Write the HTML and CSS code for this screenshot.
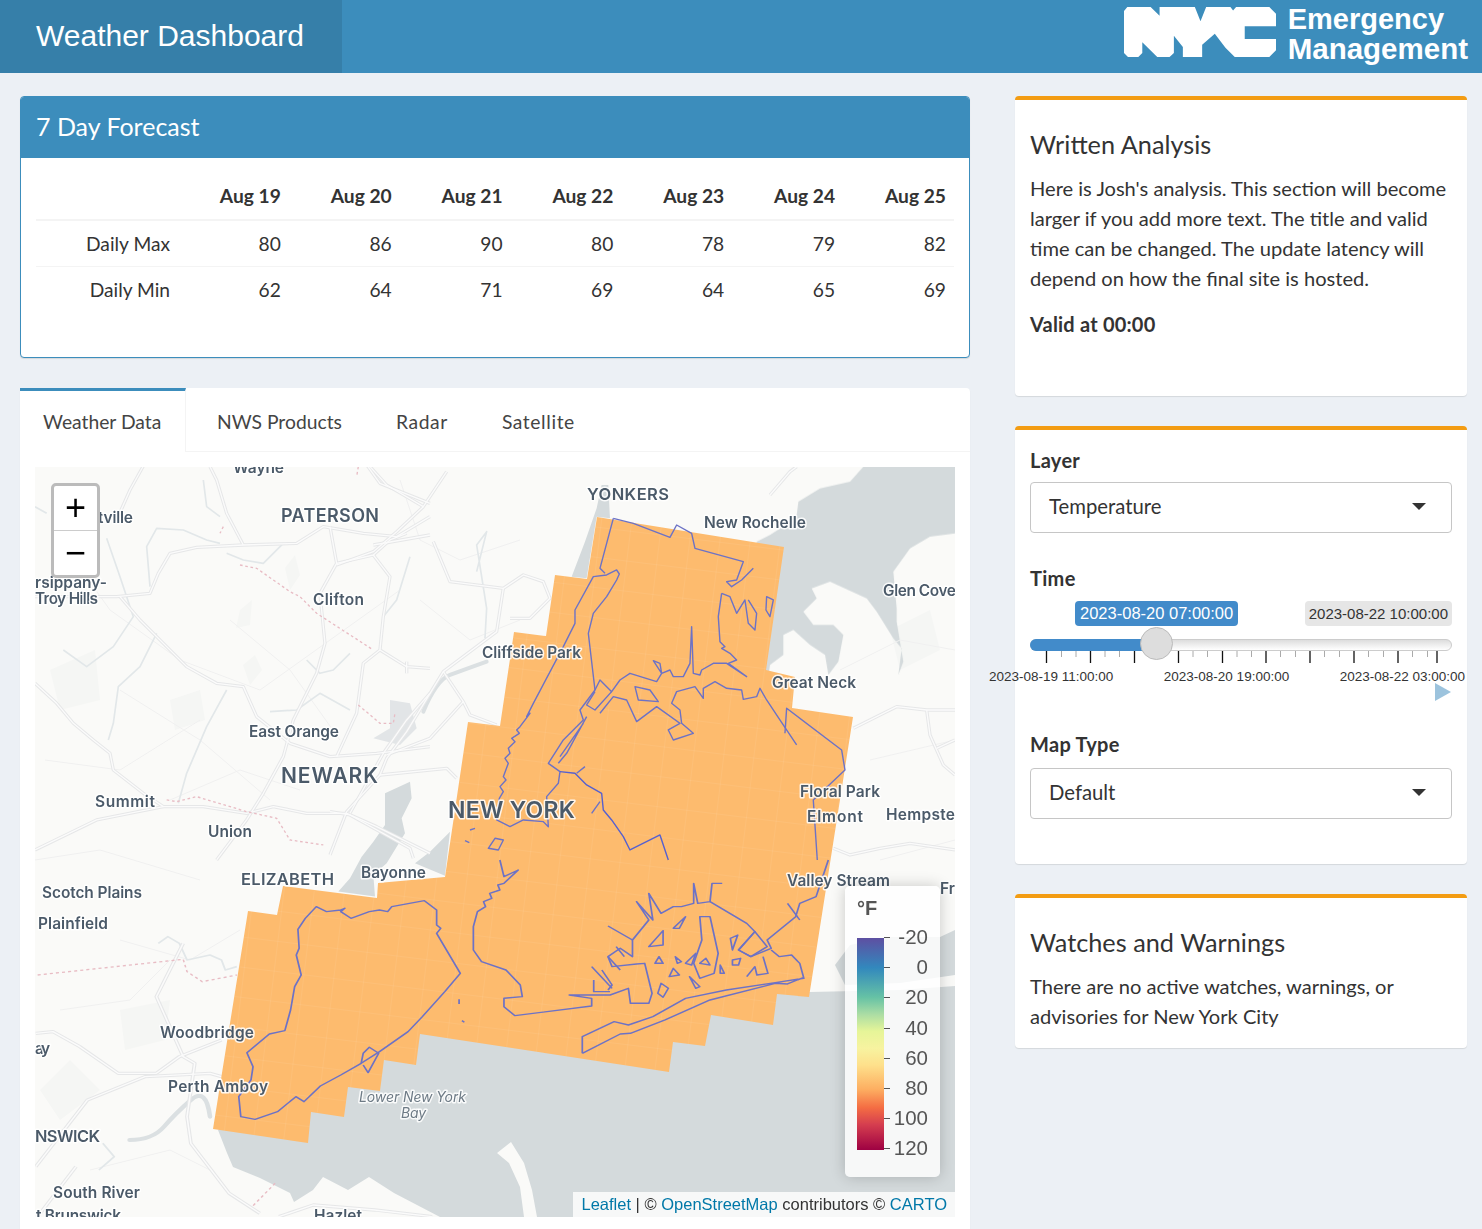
FILE: index.html
```html
<!DOCTYPE html>
<html>
<head>
    <meta charset="UTF-8">
    <meta name="viewport" content="width=device-width, initial-scale=1.0">
    <title>Weather Dashboard</title>
    <link rel="stylesheet" href="styles.css">
</head>
<body>
    <header class="topbar">
        <div class="brand">Weather Dashboard</div>
        <div class="logo">
            <svg class="logo-mark" viewBox="15 12 457 150" aria-label="NYC">
                <path d="M25 12H95L122 38V12H228L245 55L262 12H335L343 22L352 12H452L472 32V70H378V108H472V142L452 162H348L320 134L288 92L250 125V162H192V132L165 98V150L152 162H115L70 118V150L58 162H27L15 150V24Z"/>
            </svg>
            <div class="logo-text"><span class="logo-line1">Emergency</span><br>Management</div>
        </div>
    </header>

    <div class="content">
        <div class="left-col">
            <section class="forecast">
                <h2 class="forecast-title">7 Day Forecast</h2>
                <div class="forecast-body">
                    <table class="forecast-table">
                        <thead>
                            <tr><th></th><th>Aug 19</th><th>Aug 20</th><th>Aug 21</th><th>Aug 22</th><th>Aug 23</th><th>Aug 24</th><th>Aug 25</th></tr>
                        </thead>
                        <tbody>
                            <tr><td>Daily Max</td><td>80</td><td>86</td><td>90</td><td>80</td><td>78</td><td>79</td><td>82</td></tr>
                            <tr><td>Daily Min</td><td>62</td><td>64</td><td>71</td><td>69</td><td>64</td><td>65</td><td>69</td></tr>
                        </tbody>
                    </table>
                </div>
            </section>

            <section class="tabbox">
                <nav class="tabs">
                    <a class="tab active">Weather Data</a>
                    <a class="tab">NWS Products</a>
                    <a class="tab tab-spaced">Radar</a>
                    <a class="tab tab-spaced">Satellite</a>
                </nav>
                <div class="tab-pane">
                    <div class="map">
                        <svg class="map-canvas" viewBox="35 467 920 750">
                            <defs>
                                <filter id="soft"><feGaussianBlur stdDeviation="0.45"/></filter>
                                <clipPath id="overlayClip">
                                    <polygon points="597,517 784,547 766,670 795,677 792,708 853,717 809,997 777,994 773,1025 711,1015 705,1046 673,1042 669,1072 420,1034 416,1065 384,1060 380,1091 348,1087 344,1117 311,1112 308,1143 213,1129 248,911 277,915 283,886 377,898 378,883 445,877 468,722 500,726 514,632 546,636 555,575 587,579"/>
                                </clipPath>
                                <pattern id="tileGrid" width="30" height="30" patternUnits="userSpaceOnUse" patternTransform="rotate(7)">
                                    <path d="M30 0H0V30" fill="none" stroke="#fff" stroke-opacity="0.12"/>
                                </pattern>
                                <g id="roads">
                                    <g transform="translate(30 460) scale(.3333)">
                                        <path d="M15 410L260 410 360 400 385 340 420 280 500 262 640 255 800 250 880 200 1000 220 1100 230 1200 170"/>
                                        <path d="M270 410L330 480 410 560 470 620 560 670 640 680 680 770 780 850 900 890 1040 880 1200 860"/>
                                        <path d="M640 255L590 160 560 60 540 20"/>
                                        <path d="M900 200L920 310 870 400 885 550 860 640 790 780 760 890 700 1000 650 1080 560 1200"/>
                                        <path d="M15 670L80 730 130 790 190 840 240 880 250 930 340 1000 400 1040 520 1040 650 1060 730 1040 830 1060 950 1060 1040 1100 1200 1180"/>
                                        <path d="M920 310L1030 285 1080 240 1130 220"/>
                                        <path d="M1030 285L1080 350 1060 470 1050 570 1130 620 1200 625"/>
                                        <path d="M1050 570L1000 610 980 760 920 890"/>
                                        <path d="M15 1170L200 1080 400 1040"/>
                                        <path d="M960 1060L1060 880 1130 780 1200 700"/>
                                        <path d="M1000 0L1050 70 1200 130"/>
                                        <path d="M350 0L300 90 260 180"/>
                                    </g>
                                    <g transform="translate(330 465) scale(.3333)">
                                        <path d="M310 230L360 350 520 370 580 330 640 350 660 400 600 460 540 460"/>
                                        <path d="M520 370L500 500 340 620 230 800 170 880 150 930 350 910 380 940"/>
                                        <path d="M340 620L400 710 420 750 500 780"/>
                                        <path d="M400 710L300 820 170 870"/>
                                        <path d="M150 930L50 1040 0 1170"/>
                                        <path d="M0 1040L60 1050 240 1150 250 1180"/>
                                        <path d="M130 240L300 210"/>
                                        <path d="M120 5L170 60 280 125 350 20"/>
                                        <path d="M280 125L200 200 130 260 20 300"/>
                                        <path d="M230 590V625"/>
                                    </g>
                                    <g transform="translate(30 900) scale(.383 .3333)">
                                        <path d="M15 400L60 395 130 440 230 520 330 520 390 470 500 420"/>
                                        <path d="M400 130L330 290 400 470 430 490 410 650 420 730 520 880 600 940"/>
                                        <path d="M15 800L150 600 300 530 470 520 500 530"/>
                                        <path d="M120 800L20 950"/>
                                        <path d="M650 950L740 915 900 930 1050 950"/>
                                    </g>
                                    <g transform="translate(770 465) scale(.3333)">
                                        <path d="M250 790L380 725 470 735 555 735"/>
                                        <path d="M470 735L480 810 520 900 555 930"/>
                                        <path d="M500 850L555 825"/>
                                        <path d="M190 1150L240 1170 330 1150 420 1135 555 1155"/>
                                        <path d="M0 90L60 20 80 5"/>
                                    </g>
                                </g>
                            </defs>

                            <rect class="land" x="35" y="467" width="920" height="750"/>

                            <g filter="url(#soft)">
                                <g class="parks">
                                    <polygon points="243,665 255,655 262,670 250,685"/>
                                    <polygon points="285,568 295,555 300,575 290,590"/>
                                    <polygon points="240,610 252,600 250,625 236,628"/>
                                    <polygon points="170,700 200,690 205,720 175,730"/>
                                    <polygon points="50,670 95,650 100,700 60,710"/>
                                    <polygon points="40,1090 70,1060 100,1090 60,1120"/>
                                    <polygon points="120,1010 170,1000 165,1040 125,1050"/>
                                    <polygon points="890,630 930,610 940,650 900,670"/>
                                </g>

                                <g class="water">
                                    <polygon points="218,1130 227,1153 233,1167 260,1178 290,1193 294,1202 313,1190 323,1177 348,1190 369,1177 394,1193 440,1217 955,1217 955,986 900,990 810,992 600,1000 420,1000"/>
                                    <polygon transform="translate(770 465) scale(.3333)" points="-60,1000 0,600 40,570 40,510 70,495 120,540 165,570 175,630 205,590 220,510 190,480 130,480 100,440 140,400 125,370 180,350 290,400 320,440 370,520 395,550 385,630 400,590 380,470 380,430 370,320 420,250 480,215 555,205 555,5 280,5 240,50 150,70 85,110 80,150 30,190 0,210 -40,230"/>
                                    <polygon transform="translate(330 465) scale(.3333)" points="835,60 840,160 800,155 770,340 725,335 765,230 800,130 815,60"/>
                                    <polygon transform="translate(330 465) scale(.3333)" points="165,985 240,950 245,1000 215,1060 225,1105 170,1195 130,1230 135,1295 25,1280 60,1240 95,1175 130,1130 165,1080"/>
                                    <polygon transform="translate(330 465) scale(.3333)" points="345,1232 360,1100 300,1160 255,1195"/>
                                    <polygon points="835,965 850,945 890,937 940,937 955,930 955,975 900,983 845,985"/>
                                    <path class="water-line" transform="translate(330 465) scale(.3333)" d="M470 590Q400 615 360 630T280 740"/>
                                    <path class="water-line" transform="translate(30 900) scale(.383 .3333)" d="M260 720Q320 720 350 680T420 600 470 650"/>
                                </g>
                                <polygon class="marsh" transform="translate(330 465) scale(.3333)" points="180,705 240,715 260,790 210,840 130,820 180,790"/>
                                <polygon class="land" points="497,1153 511,1142 524,1163 532,1190 537,1217 524,1217 520,1187 509,1163"/>

                                <g class="minor-roads">
                                    <path d="M60 540L110 610 180 660 260 690 330 640 400 590"/>
                                    <path d="M120 690L200 740 270 800"/>
                                    <path d="M230 620L290 670 340 740"/>
                                    <path d="M45 760L120 770 200 720"/>
                                    <path d="M170 800L240 770 300 790"/>
                                    <path d="M400 480L420 540 460 560 520 540"/>
                                    <path d="M420 600L470 640 520 620"/>
                                    <path d="M120 940L190 960 240 930"/>
                                    <path d="M60 1010L130 1000 170 960"/>
                                    <path d="M90 1170L170 1150 210 1170"/>
                                    <path d="M35 860L100 850 200 880"/>
                                    <path d="M870 760L955 740"/>
                                    <path d="M880 860L955 840"/>
                                    <path d="M840 670L900 640 955 650"/>
                                </g>

                                <g class="rivers">
                                    <g transform="translate(30 460) scale(.3333)">
                                        <path d="M360 380L350 260 380 205 460 210 530 240 570 250"/>
                                        <path d="M15 140L50 160"/>
                                        <path d="M590 280L640 300 700 310 760 250"/>
                                        <path d="M230 235L270 350 310 470 250 560 170 620 100 570"/>
                                        <path d="M380 520L330 620 265 680 250 790 235 840"/>
                                        <path d="M590 690L530 800 470 940 445 1030"/>
                                        <path d="M720 755L800 750 870 700 960 750"/>
                                        <path d="M830 600L870 640 910 630 960 580"/>
                                        <path d="M520 60L530 140 570 170"/>
                                        <path d="M1060 470L1100 420 1140 290"/>
                                    </g>
                                    <g transform="translate(30 900) scale(.383 .3333)">
                                        <path d="M335 130L360 110 390 130 410 180 470 165 500 180 510 210 540 200"/>
                                        <path d="M190 730L220 770 180 810"/>
                                    </g>
                                    <path transform="translate(330 465) scale(.3333)" d="M440 320L470 200 440 240 470 430 465 520"/>
                                </g>

                                <use href="#roads" class="road-casing"/>
                                <use href="#roads" class="road-core"/>

                                <g class="boundary">
                                    <path transform="translate(30 460) scale(.3333)" d="M630 315L680 325 780 395 810 410 860 460 1030 570M985 735L1050 790 1090 790 1095 760M410 1020L440 1025 500 1010 650 1055 740 1075 780 1140 880 1155M985 20L980 50M580 200L570 220"/>
                                    <path transform="translate(30 900) scale(.383 .3333)" d="M20 225L400 178 410 215 450 245 540 225M640 850L580 920"/>
                                </g>
                            </g>

                            <g clip-path="url(#overlayClip)">
                                <rect class="overlay" x="200" y="500" width="670" height="660"/>
                                <rect x="200" y="500" width="670" height="660" fill="url(#tileGrid)"/>
                            </g>

                            <g class="outlines">
                                <g transform="translate(420 500) scale(.3333)">
                                    <path d="M580 55L640 70 750 112 770 75 815 100 825 145 970 185 950 240 920 245 935 260 965 240 1000 205"/>
                                    <path d="M580 55L540 205 555 220"/>
                                    <path d="M598 222L590 210 560 225 520 230 465 330 465 370 430 440 340 610 320 650 330 640 300 680 290 690 298 700 275 715 285 725 265 745 270 760 255 775 265 790 250 830 258 840 240 860 250 875 238 895 230 960 270 980 310 960 370 965 385 980 380 890 415 850 420 815 385 790 430 720 490 660 480 630 525 570 505 400 520 340 560 290 590 240Z"/>
                                    <path d="M905 280L895 350 900 425 915 440 905 445 930 460 950 480 925 490 980 530 920 490 880 490 845 510 840 525 820 520 815 380 810 490 790 530 760 530 750 510 725 520 720 490 700 482 725 520 710 545 630 520 600 540 575 575 540 540 525 570"/>
                                    <path d="M905 280L930 290 950 340 975 300 985 370 1005 390 1010 340 985 300"/>
                                    <path d="M1040 290L1060 300 1050 350 1038 330Z"/>
                                    <path d="M575 575L525 630 500 615 525 575M540 640L580 590 620 600 650 665 710 620 780 670 745 690 760 720 820 700 785 670 780 630 755 610 770 575 825 560 850 595 850 565 885 545 920 565 965 570 970 598 1010 590 1020 565 1040 600 1130 735"/>
                                    <path d="M645 560L655 600 715 605 690 570Z"/>
                                    <path d="M500 650L440 760 415 790M490 670L420 770"/>
                                    <path d="M1095 700L1100 625 1265 750 1275 810 1180 900 1192 1080"/>
                                    <path class="outline-strong" d="M420 815L465 820 500 855 545 880 550 930 575 960 610 1010 630 1050 720 1005 745 1080"/>
                                    <path d="M470 820L495 800M540 905L515 940"/>
                                    <path d="M205 1045L225 1015 250 1020 235 1050Z"/>
                                    <path d="M135 1022L148 1028M150 990L165 985"/>
                                </g>
                                <g transform="translate(200 860) scale(.408 .3333)">
                                    <path d="M285 140L258 175 240 208 243 265 236 285 248 345 232 380 222 450 208 512 170 522 115 578 130 620 125 660 95 710 100 770 135 778 190 755 235 710 255 725 295 678 345 645 395 610 440 575 510 515 545 470 600 395 638 340 580 220 590 205 580 195 580 150 550 122 470 140 460 155 440 150 415 155 370 175 345 155 355 145 345 150 310 155Z"/>
                                    <path d="M395 610L400 580 415 562 438 580 412 638 400 615"/>
                                    <path d="M735 0L745 50 780 30 745 70 730 75 735 90 710 100 715 115 695 125 700 140 680 155 670 200 670 270 690 305 750 330 785 375 790 410 745 415 745 440 772 467 960 438 960 415 905 405 1005 405 1050 385 1055 430 1100 430 1108 400 1090 310 1070 312 1010 320 1000 290 1030 265 1060 290 1060 240 1100 180 1070 125 1110 180 1100 100 1130 160 1160 140 1180 140 1210 130 1210 70 1220 130 1250 125 1255 70 1280 70M1250 125L1340 190 1360 215 1320 270 1350 290 1400 265 1390 240 1460 170 1470 130 1510 110 1540 0"/>
                                    <path d="M1000 198L1060 240M1440 130L1470 180"/>
                                    <path d="M937 580L937 530 1015 485 1050 495 1110 470 1190 415 1290 390 1410 368 1480 355 1470 310 1450 285 1420 290 1400 270M937 580L1030 522 1055 520 1140 480 1250 420 1410 370 1440 372 1480 352"/>
                                    <path d="M1100 260L1135 212 1135 255ZM1160 205L1190 170 1175 205ZM1125 290L1135 310 1115 310ZM1160 325L1175 345 1150 350ZM1130 370L1148 385 1135 412 1122 400ZM1200 350L1225 380 1215 385ZM1225 170L1250 170 1270 280 1260 340 1225 355 1210 310 1230 240Z"/>
                                    <path d="M1300 235L1318 225 1305 270ZM1360 215L1390 260 1350 290 1320 270ZM1275 315L1285 340 1275 340ZM1305 300L1325 295 1320 315 1305 315Z"/>
                                    <path d="M1000 290L1030 330M1040 290L1020 260M960 320L1010 385M985 330L1010 375 1000 390M965 360V395H1005"/>
                                    <path d="M1165 290L1180 305 1170 310ZM1190 310L1215 280 1205 315ZM1225 310L1240 295 1250 315Z"/>
                                    <path d="M1380 290L1392 340 1365 345 1360 320 1340 350"/>
                                    <path d="M635 418V432M642 482L648 487"/>
                                </g>
                            </g>

                            <g class="labels">
                                <text x="233" y="473" textLength="51">Wayne</text>
                                <text x="98" y="523" textLength="35">tville</text>
                                <text class="big" x="281" y="522" textLength="98">PATERSON</text>
                                <text x="313" y="605" textLength="51">Clifton</text>
                                <text x="35" y="588" textLength="72">rsippany-</text>
                                <text x="35" y="604" textLength="63">Troy Hills</text>
                                <text x="249" y="737" textLength="90">East Orange</text>
                                <text class="bigger" x="281" y="783" textLength="97">NEWARK</text>
                                <text x="95" y="807" textLength="60">Summit</text>
                                <text x="208" y="837" textLength="44">Union</text>
                                <text class="mid" x="241" y="885" textLength="93">ELIZABETH</text>
                                <text x="361" y="878" textLength="65">Bayonne</text>
                                <text x="42" y="898" textLength="100">Scotch Plains</text>
                                <text x="38" y="929" textLength="70">Plainfield</text>
                                <text x="160" y="1038" textLength="94">Woodbridge</text>
                                <text x="35" y="1054" textLength="15">ay</text>
                                <text x="168" y="1092" textLength="100">Perth Amboy</text>
                                <text class="mid" x="35" y="1142" textLength="65">NSWICK</text>
                                <text x="53" y="1198" textLength="87">South River</text>
                                <text x="314" y="1221" textLength="48">Hazlet</text>
                                <text x="36" y="1221" textLength="85">t Brunswick</text>
                                <text class="bay" x="359" y="1102" textLength="107">Lower New York</text>
                                <text class="bay" x="401" y="1118" textLength="25">Bay</text>
                                <text class="mid" x="587" y="500" textLength="82">YONKERS</text>
                                <text x="704" y="528" textLength="102">New Rochelle</text>
                                <text x="883" y="596" textLength="73">Glen Cove</text>
                                <text x="482" y="658" textLength="99">Cliffside Park</text>
                                <text x="772" y="688" textLength="84">Great Neck</text>
                                <text x="800" y="797" textLength="80">Floral Park</text>
                                <text x="807" y="822" textLength="56">Elmont</text>
                                <text x="886" y="820" textLength="69">Hempste</text>
                                <text class="biggest" x="448" y="818" textLength="127">NEW YORK</text>
                                <text x="787" y="886" textLength="103">Valley Stream</text>
                                <text x="940" y="894" textLength="15">Fr</text>
                            </g>
                        </svg>

                        <div class="zoom-control">
                            <a class="zoom-btn">+</a>
                            <a class="zoom-btn">&#8722;</a>
                        </div>

                        <div class="legend">
                            <div class="legend-title">°F</div>
                            <div class="legend-scale">
                                <div class="legend-bar"></div>
                                <div class="legend-labels">
                                    <span>-20</span><span>0</span><span>20</span><span>40</span><span>60</span><span>80</span><span>100</span><span>120</span>
                                </div>
                            </div>
                        </div>

                        <div class="attribution"><a>Leaflet</a> | © <a>OpenStreetMap</a> contributors © <a>CARTO</a></div>
                    </div>
                </div>
            </section>
        </div>

        <div class="right-col">
            <section class="card card-analysis">
                <h3 class="card-title">Written Analysis</h3>
                <p class="card-text">Here is Josh's analysis. This section will become larger if you add more text. The title and valid time can be changed. The update latency will depend on how the final site is hosted.</p>
                <p class="card-text valid">Valid at 00:00</p>
            </section>

            <section class="card card-controls">
                <label class="field-label">Layer</label>
                <div class="select"><span>Temperature</span><i class="caret"></i></div>

                <label class="field-label time-label">Time</label>
                <div class="slider">
                    <div class="slider-values">
                        <span class="val-from">2023-08-20 07:00:00</span>
                        <span class="val-to">2023-08-22 10:00:00</span>
                    </div>
                    <div class="slider-track">
                        <div class="slider-fill"></div>
                        <div class="slider-handle"></div>
                    </div>
                    <svg class="slider-ticks" viewBox="0 0 422 12">
                        <path class="tick-major" d="M16.5 0V12M60.5 0V12M104.5 0V12M148.5 0V12M192.5 0V12M236 0V12M280 0V12M324 0V12M368 0V12M407 0V12"/>
                        <path class="tick-minor" d="M31.5 0V6M46 0V6M75 0V6M89.5 0V6M163 0V6M177.5 0V6M207 0V6M221.5 0V6M250.5 0V6M265.5 0V6M294.5 0V6M309.5 0V6M338.5 0V6M353.5 0V6M382.5 0V6M397.5 0V6"/>
                    </svg>
                    <div class="slider-axis">
                        <span>2023-08-19 11:00:00</span>
                        <span>2023-08-20 19:00:00</span>
                        <span>2023-08-22 03:00:00</span>
                    </div>
                    <svg class="slider-play" viewBox="0 0 16 18"><polygon points="0,0 16,9 0,18"/></svg>
                </div>

                <label class="field-label map-type-label">Map Type</label>
                <div class="select map-type-select"><span>Default</span><i class="caret"></i></div>
            </section>

            <section class="card card-watches">
                <h3 class="card-title">Watches and Warnings</h3>
                <p class="card-text">There are no active watches, warnings, or advisories for New York City</p>
            </section>
        </div>
    </div>
</body>
</html>
```

FILE: styles.css
```css
html, body {
    height: 100%;
}
body {
    margin: 0;
    overflow: hidden;
    background-color: #ecf0f5;
    font-family: "Lato", sans-serif;
    font-size: 20px;
    color: #333;
}
.topbar {
    height: 73px;
    background-color: #3c8dbc;
    display: flex;
    justify-content: space-between;
    color: white;
}
.brand {
    width: 306px;
    padding-left: 36px;
    background-color: #367fa9;
    font-family: "Liberation Sans", Arial, sans-serif;
    font-size: 30px;
    line-height: 71px;
}
.logo {
    display: flex;
    align-items: center;
    gap: 12px;
    padding-right: 14px;
}
.logo-mark {
    width: 152px;
    height: 50px;
    margin-top: -9px;
    fill: white;
}
.logo-text {
    font-family: "Liberation Sans", Arial, sans-serif;
    font-weight: bold;
    font-size: 29.5px;
    line-height: 30px;
    margin-top: -5px;
}
.logo-line1 {
    font-size: 29px;
}
.content {
    display: grid;
    grid-template-columns: 950px 452px;
    column-gap: 45px;
    padding: 23px 15px 0 20px;
}

/* forecast table */
.forecast {
    height: 262px;
    box-sizing: border-box;
    border: 1px solid #3c8dbc;
    border-radius: 4px;
    background: white;
    box-shadow: 0 1px 1px rgba(0,0,0,0.1);
    overflow: hidden;
}
.forecast-title {
    margin: 0;
    height: 61px;
    padding-left: 15px;
    background-color: #3c8dbc;
    color: white;
    font-size: 25px;
    font-weight: 400;
    line-height: 58px;
}
.forecast-body {
    padding: 15px;
}
.forecast-table {
    width: 100%;
    border-collapse: collapse;
    table-layout: fixed;
    font-size: 19.2px;
}
.forecast-table th, .forecast-table td {
    padding: 0 8px;
    text-align: right;
}
.forecast-table th:first-child, .forecast-table td:first-child {
    width: 142px;
}
.forecast-table th {
    height: 47px;
    padding-bottom: 2px;
    box-sizing: border-box;
    font-weight: bold;
    border-bottom: 2px solid #f4f4f4;
}
.forecast-table td {
    height: 45px;
    border-top: 1px solid #f4f4f4;
}
.forecast-table tbody tr:first-child td {
    border-top: none;
}

/* tab box with the map */
.tabbox {
    margin-top: 30px;
    background: white;
    border-radius: 4px;
    box-shadow: 0 1px 1px rgba(0,0,0,0.1);
}
.tabs {
    display: flex;
    gap: 7px;
    height: 64px;
    box-sizing: border-box;
    border-bottom: 1px solid #f4f4f4;
    font-size: 19.3px;
}
.tab {
    padding: 0 24px 0 23px;
    line-height: 62px;
    color: #444;
    border-top: 3px solid transparent;
    height: 64px;
    box-sizing: border-box;
    white-space: nowrap;
}
.tab-spaced {
    letter-spacing: 0.6px;
}
.tab.active {
    width: 166px;
    margin-right: 1px;
    border-top-color: #3c8dbc;
    border-right: 1px solid #f4f4f4;
    background: white;
}
.tab-pane {
    padding: 15px 15px 30px;
}
.map {
    position: relative;
    width: 920px;
    height: 750px;
    overflow: hidden;
}
.map-canvas {
    display: block;
    width: 920px;
    height: 750px;
}
.land {
    fill: #fafaf8;
}
.marsh {
    fill: #e2e5e7;
}
.parks polygon {
    fill: #f5f6f4;
}
.water polygon {
    fill: #d4dadc;
}
.water-line {
    fill: none;
    stroke: #dbe0e2;
    stroke-width: 12;
    stroke-linecap: round;
}
.minor-roads path {
    fill: none;
    stroke: #f0f0f0;
    stroke-width: 1;
}
.rivers path {
    fill: none;
    stroke: #e2e7e9;
    stroke-width: 5;
    stroke-linejoin: round;
}
.road-casing, .road-core {
    fill: none;
    stroke-linejoin: round;
}
.road-casing {
    stroke: #e6e7e8;
    stroke-width: 10;
}
.road-core {
    stroke: #fbfbfb;
    stroke-width: 4;
}
.boundary path {
    fill: none;
    stroke: #e8bcc4;
    stroke-width: 4;
    stroke-dasharray: 8 8;
}
.overlay {
    fill: #fdbb6e;
}
.outlines path {
    fill: none;
    stroke: #6c72c6;
    stroke-width: 4.2;
    stroke-linejoin: round;
}
.outlines .outline-strong {
    stroke: #5560d0;
}
.labels text {
    font-family: "Inter", sans-serif;
    font-size: 15.5px;
    font-weight: 600;
    fill: #4b5a69;
    stroke: rgba(255,255,255,0.85);
    stroke-width: 3px;
    stroke-linejoin: round;
    paint-order: stroke;
}
.labels .mid {
    font-size: 16.5px;
}
.labels .big {
    font-size: 18px;
}
.labels .bigger {
    font-size: 21px;
}
.labels .biggest {
    font-size: 23px;
}
.labels .bay {
    font-weight: 400;
    font-style: italic;
    font-size: 14px;
    fill: #6d7a85;
}

/* map controls */
.zoom-control {
    position: absolute;
    top: 16px;
    left: 16px;
    width: 43px;
    border: 3px solid #bbb;
    border-radius: 5px;
    background: white;
}
.zoom-btn {
    display: block;
    height: 44px;
    overflow: hidden;
    text-align: center;
    font-family: "Liberation Mono", monospace;
    font-size: 36px;
    line-height: 50px;
    color: black;
}
.zoom-btn + .zoom-btn {
    border-top: 1px solid #ccc;
}
.legend {
    position: absolute;
    right: 15px;
    top: 419px;
    width: 95px;
    height: 291px;
    box-sizing: border-box;
    padding: 11px 12px;
    background: rgba(255,255,255,0.8);
    border-radius: 5px;
    box-shadow: 0 0 15px rgba(0,0,0,0.2);
    font-family: "Liberation Sans", Arial, sans-serif;
    color: #555;
}
.legend-title {
    font-weight: bold;
    font-size: 20px;
    line-height: 23px;
}
.legend-scale {
    display: flex;
    margin-top: 18px;
}
.legend-bar {
    width: 27px;
    height: 212px;
    background: linear-gradient(#5e4fa2, #3288bd 14%, #66c2a5 28%, #abdda4 36%, #e6f598 44%, #f7f3a0 52%, #fee08b 60%, #fdae61 71.4%, #f46d43 80%, #d53e4f 88%, #9e0142);
}
.legend-labels {
    flex: 1;
    margin-top: -16px;
    display: flex;
    flex-direction: column;
}
.legend-labels span {
    position: relative;
    height: 30.2px;
    line-height: 30px;
    font-size: 20.5px;
    text-align: right;
}
.legend-labels span::before {
    content: "";
    position: absolute;
    left: 0;
    top: 15px;
    width: 6px;
    height: 1px;
    background: #555;
}
.attribution {
    position: absolute;
    right: 0;
    bottom: 0;
    padding: 0 8px;
    height: 25px;
    line-height: 25px;
    background: rgba(255,255,255,0.8);
    font-family: "Liberation Sans", Arial, sans-serif;
    font-size: 16.5px;
    white-space: nowrap;
}
.attribution a {
    color: #0078a8;
}

/* right column cards */
.right-col {
    display: flex;
    flex-direction: column;
    gap: 30px;
}
.card {
    box-sizing: border-box;
    padding: 0 15px;
    background: white;
    border-top: 4px solid #f39c12;
    border-radius: 4px;
    box-shadow: 0 1px 1px rgba(0,0,0,0.1);
}
.card-analysis {
    height: 300px;
}
.card-controls {
    height: 438px;
}
.card-watches {
    height: 154px;
}
.card-title {
    margin: 26px 0 11px;
    font-size: 25.3px;
    font-weight: 400;
    line-height: 36px;
}
.card-text {
    margin: 0;
    font-size: 20.1px;
    line-height: 30px;
}
.valid {
    margin-top: 16px;
    font-size: 20px;
    font-weight: bold;
    letter-spacing: 0.2px;
}
.field-label {
    display: block;
    margin-top: 16px;
    font-weight: bold;
    letter-spacing: 0.3px;
    line-height: 28px;
}
.select {
    display: flex;
    justify-content: space-between;
    align-items: center;
    height: 51px;
    box-sizing: border-box;
    margin-top: 8px;
    padding: 0 25px 3px 18px;
    border: 1px solid #c6c6c6;
    border-radius: 4px;
    font-size: 20.3px;
}
.caret {
    width: 0;
    height: 0;
    border-left: 7px solid transparent;
    border-right: 7px solid transparent;
    border-top: 7px solid #333;
}
.time-label {
    margin-top: 31px;
}
.map-type-label {
    margin-top: 0;
}
.map-type-select {
    margin-top: 10px;
}

/* time slider */
.slider {
    position: relative;
    height: 129px;
    margin-top: 9px;
    font-family: "Liberation Sans", Arial, sans-serif;
}
.slider-values {
    display: flex;
    justify-content: space-between;
    align-items: center;
    height: 25px;
    margin-left: 45px;
}
.val-from, .val-to {
    height: 25px;
    line-height: 25px;
    border-radius: 4px;
}
.val-from {
    padding: 0 5px;
    background: #428bca;
    color: white;
    font-size: 16.5px;
}
.val-to {
    padding: 0 4px;
    background: #e6e6e6;
    color: #333;
    font-size: 15px;
}
.slider-track {
    position: relative;
    height: 12px;
    margin-top: 13px;
    box-sizing: border-box;
    border: 1px solid #ccc;
    border-radius: 6px;
    background: linear-gradient(#ddd, #fff);
}
.slider-fill {
    position: absolute;
    left: -1px;
    top: -1px;
    bottom: -1px;
    width: 127px;
    background: #428bca;
    border-radius: 6px 0 0 6px;
}
.slider-handle {
    position: absolute;
    left: 109px;
    top: -13px;
    width: 31px;
    height: 31px;
    border: 1px solid #bbb;
    border-radius: 50%;
    background: #ddd;
}
.slider-ticks {
    display: block;
    width: 422px;
    height: 12px;
}
.tick-major {
    stroke: #111;
    stroke-width: 1.3;
}
.tick-minor {
    stroke: #aaa;
    stroke-width: 1;
}
.slider-axis {
    display: flex;
    justify-content: space-between;
    margin: 6px -13px 0 -41px;
    font-size: 13.5px;
    line-height: 16px;
}
.slider-play {
    position: absolute;
    right: 1px;
    top: 82px;
    width: 16px;
    height: 18px;
    fill: #9cc3dd;
}
```
